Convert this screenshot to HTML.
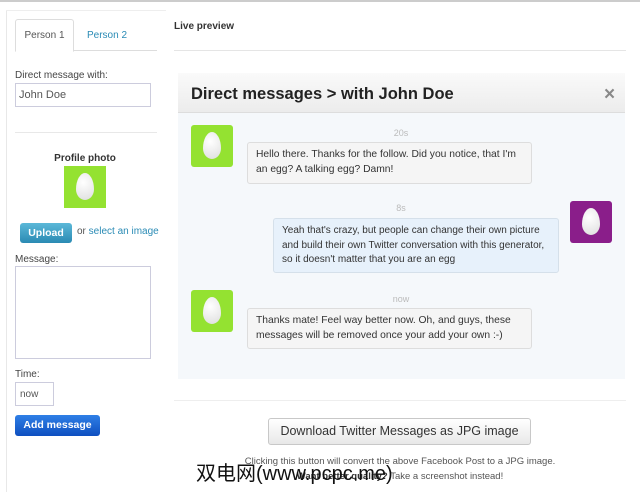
<!DOCTYPE html>
<html><head><meta charset="utf-8"><style>
*{margin:0;padding:0;box-sizing:border-box}
body{width:640px;height:492px;background:#fff;font-family:"Liberation Sans",Arial,sans-serif;position:relative;overflow:hidden;font-size:10px;color:#333}
.a{position:absolute}
.egg{position:absolute;width:42px;height:42px;border-radius:3px}
.egg::after{content:"";position:absolute;left:12px;top:7px;width:18px;height:27px;border-radius:50% 50% 50% 50%/60% 60% 40% 40%;background:radial-gradient(circle at 40% 35%,#fff,#ddd)}
.g{background:#94e231}.p{background:#8a1e8a}
.b{position:absolute;border:1px solid #ddd;border-radius:3px;background:#f5f5f5;font-size:10.3px;line-height:14.5px;color:#333;padding:5px 8px}
.t{position:absolute;font-size:9px;color:#bbb;width:40px;text-align:center}
</style></head><body>
<div class="a" style="left:0;top:0;width:640px;height:2px;background:#ccc"></div>
<div class="a" style="left:6px;top:10px;width:1px;height:482px;background:#e8e8e8"></div>
<div class="a" style="left:6px;top:10px;width:160px;height:1px;background:#eee"></div>
<div class="a" style="left:15px;top:50px;width:142px;height:1px;background:#ddd"></div>
<div class="a" style="left:15px;top:19px;width:59px;height:33px;border:1px solid #ddd;border-bottom:1px solid #fff;border-radius:3px 3px 0 0;background:#fff;text-align:center;line-height:31px;color:#555">Person 1</div>
<div class="a" style="left:87px;top:30px;color:#2a8bb5">Person 2</div>
<div class="a" style="left:15px;top:70px;color:#444">Direct message with:</div>
<div class="a" style="left:15px;top:83px;width:136px;height:24px;border:1px solid #ccd;padding:5px 3px;color:#555;font-size:11px">John Doe</div>
<div class="a" style="left:15px;top:132px;width:142px;height:1px;background:#e8e8e8"></div>
<div class="a" style="left:40px;top:153px;width:90px;text-align:center;font-weight:bold;color:#333">Profile photo</div>
<div class="egg g" style="left:64px;top:166px;border-radius:0"></div>
<div class="a" style="left:20px;top:223px;width:52px;height:20px;border-radius:3px;background:linear-gradient(#5bb8d8,#2a8ab3);color:#fff;font-weight:bold;text-align:center;line-height:20px;font-size:10.5px">Upload</div>
<div class="a" style="left:77px;top:226px;color:#555">or <span style="color:#2a8bb5">select an image</span></div>
<div class="a" style="left:15px;top:254px;color:#444">Message:</div>
<div class="a" style="left:15px;top:266px;width:136px;height:93px;border:1px solid #ccd"></div>
<div class="a" style="left:15px;top:369px;color:#444">Time:</div>
<div class="a" style="left:15px;top:382px;width:39px;height:24px;border:1px solid #ccd;padding:6px 4px;color:#555">now</div>
<div class="a" style="left:15px;top:415px;width:85px;height:21px;border-radius:3px;background:linear-gradient(#2f7fe6,#0e4fc0);color:#fff;font-weight:bold;text-align:center;line-height:21px;font-size:10.5px">Add message</div>
<div class="a" style="left:174px;top:21px;font-weight:bold;color:#333">Live preview</div>
<div class="a" style="left:174px;top:50px;width:452px;height:1px;background:#e5e5e5"></div>
<div class="a" style="left:178px;top:73px;width:447px;height:306px;background:#f5f8fb"></div>
<div class="a" style="left:178px;top:73px;width:447px;height:40px;background:linear-gradient(#fafafa,#ececec);border-bottom:1px solid #ddd"></div>
<div class="a" style="left:191px;top:85px;font-size:16.5px;font-weight:bold;color:#222">Direct messages &gt; with John Doe</div>
<div class="a" style="left:604px;top:84px;font-size:19px;font-weight:bold;color:#888">×</div>
<div class="egg g" style="left:191px;top:125px"></div>
<div class="t" style="left:381px;top:128px">20s</div>
<div class="b" style="left:247px;top:142px;width:285px;height:42px">Hello there. Thanks for the follow. Did you notice, that I'm an egg? A talking egg? Damn!</div>
<div class="t" style="left:381px;top:203px">8s</div>
<div class="egg p" style="left:570px;top:201px"></div>
<div class="b" style="left:273px;top:218px;width:286px;height:55px;background:#e7f1fb;border-color:#d5e0ea;font-size:10px">Yeah that's crazy, but people can change their own picture and build their own Twitter conversation with this generator, so it doesn't matter that you are an egg</div>
<div class="egg g" style="left:191px;top:290px"></div>
<div class="t" style="left:381px;top:294px">now</div>
<div class="b" style="left:247px;top:308px;width:285px;height:41px">Thanks mate! Feel way better now. Oh, and guys, these messages will be removed once your add your own :-)</div>
<div class="a" style="left:174px;top:400px;width:452px;height:1px;background:#eee"></div>
<div class="a" style="left:268px;top:418px;width:263px;height:27px;border:1px solid #c8c8c8;border-radius:3px;background:linear-gradient(#fff,#e8e8e8);text-align:center;line-height:25px;font-size:12.5px;color:#333">Download Twitter Messages as JPG image</div>
<div class="a" style="left:174px;top:456px;width:452px;text-align:center;font-size:9.5px;color:#555">Clicking this button will convert the above Facebook Post to a JPG image.</div>
<div class="a" style="left:174px;top:471px;width:452px;text-align:center;font-size:9.5px;color:#555"><b style="color:#333">Want better quality?</b> Take a screenshot instead!</div>
<div class="a" style="left:196px;top:457px;font-size:20px;color:#111;font-family:'Liberation Sans','Noto Sans CJK SC',sans-serif;white-space:nowrap">双电网(www.pcpc.me)</div>
</body></html>
